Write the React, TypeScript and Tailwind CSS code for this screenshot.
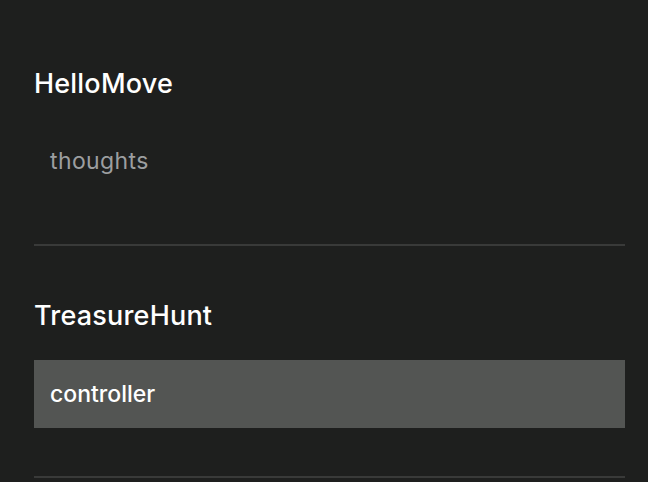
import React from "react";

interface Section {
  title: string;
  items: { name: string; active?: boolean }[];
}

const sections: Section[] = [
  { title: "HelloMove", items: [{ name: "thoughts" }] },
  { title: "TreasureHunt", items: [{ name: "controller", active: true }] },
];

const App: React.FC = () => {
  return (
    <div className="min-h-[482px] w-full bg-[#1e1f1e] pt-[14px] font-['Inter',sans-serif]">
      <div className="ml-[34px] w-[591px]">
        {sections.map((s) => (
          <div key={s.title} className="border-b-2 border-[#393a39] pt-[54px] pb-[48px]">
            <h2 className="mb-[28px] text-[27px] leading-[32px] font-medium tracking-[0.2px] text-white">
              {s.title}
            </h2>
            {s.items.map((item) =>
              item.active ? (
                <div
                  key={item.name}
                  className="h-[68px] bg-[#535553] px-4 text-[23px] leading-[68px] font-medium text-white"
                >
                  {item.name}
                </div>
              ) : (
                <div
                  key={item.name}
                  className="h-[68px] px-4 text-[23px] leading-[66px] tracking-[0.4px] text-[#9c9ea0]"
                >
                  {item.name}
                </div>
              )
            )}
          </div>
        ))}
      </div>
    </div>
  );
};

export default App;
